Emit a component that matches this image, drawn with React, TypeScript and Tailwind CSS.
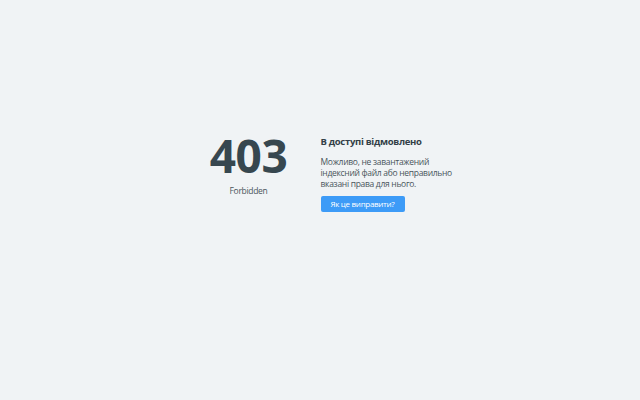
export default function App() {
  return (
    <div
      className="min-h-screen bg-[#f0f3f5] text-[#37474f] flex justify-center pt-[128px] pl-[17px]"
      style={{ fontFamily: '"Open Sans", "Noto Sans", sans-serif' }}
    >
      <div className="flex items-start">
        <div className="w-[96px] flex flex-col items-center mr-[24px]">
          <div className="text-[46px] font-bold leading-none tracking-[-0.5px] mt-[4px]">403</div>
          <div className="text-[8.5px] leading-[11px] tracking-[-0.3px] mt-[7px] text-[#4a555c]">Forbidden</div>
        </div>
        <div className="w-[136px]">
          <div className="text-[9.5px] font-bold leading-[14px] tracking-[-0.3px] mt-[7px] text-[#333f47]">
            В доступі відмовлено
          </div>
          <p className="text-[8.5px] leading-[11px] tracking-[-0.3px] mt-[7px] text-[#4a555c]">
            Можливо, не завантажений індексний файл або неправильно вказані права для нього.
          </p>
          <button className="mt-[6px] h-[16px] px-[10px] bg-[#3d9bf7] text-white text-[8px] tracking-[-0.3px] rounded-[2px] leading-none">
            Як це виправити?
          </button>
        </div>
      </div>
    </div>
  );
}
